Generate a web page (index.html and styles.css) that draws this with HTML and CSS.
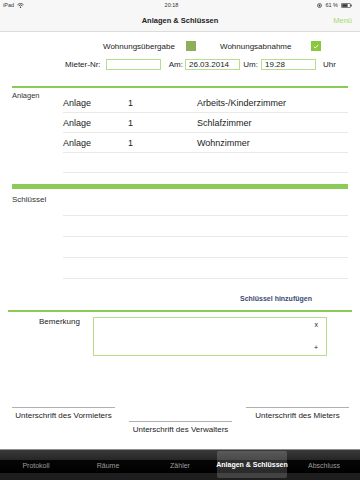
FILE: index.html
```html
<!DOCTYPE html>
<html lang="de">
<head>
    <meta charset="UTF-8">
    <meta name="viewport" content="width=device-width, initial-scale=1.0">
    <title>Anlagen &amp; Schlüssen</title>
    <link rel="stylesheet" href="styles.css">
</head>
<body>
    <div class="status">
        <span class="status-left">iPad
            <svg class="wifi" width="7" height="5" viewBox="0 0 7 5">
                <path d="M0.5 1.8 A4.2 4.2 0 0 1 6.5 1.8" fill="none" stroke="#333" stroke-width="0.8"/>
                <path d="M1.6 2.9 A2.6 2.6 0 0 1 5.4 2.9" fill="none" stroke="#333" stroke-width="0.8"/>
                <circle cx="3.5" cy="4.2" r="0.7" fill="#333"/>
            </svg>
        </span>
        <span class="status-time">20:18</span>
        <span class="status-right">
            <svg width="5" height="5" viewBox="0 0 5 5">
                <circle cx="2.5" cy="2.5" r="2" fill="none" stroke="#333" stroke-width="0.7"/>
                <circle cx="2.5" cy="2.5" r="0.9" fill="#333"/>
            </svg>
            61 %
            <svg width="11" height="5" viewBox="0 0 11 5">
                <rect x="0.4" y="0.4" width="9" height="4.2" rx="0.8" fill="none" stroke="#333" stroke-width="0.7"/>
                <rect x="1.2" y="1.2" width="5.4" height="2.6" fill="#333"/>
                <rect x="9.7" y="1.6" width="1" height="1.8" fill="#333"/>
            </svg>
        </span>
    </div>

    <div class="nav">
        <span></span>
        <span class="nav-title">Anlagen &amp; Schlüssen</span>
        <span class="nav-menu">Menü</span>
    </div>

    <div class="options">
        <span class="opt-label">Wohnungsübergabe</span>
        <span class="check"></span>
        <span class="opt-label opt-label-2">Wohnungsabnahme</span>
        <span class="check check-on">
            <svg width="6" height="5" viewBox="0 0 6 5">
                <path d="M0.8 2.6 L2.3 4 L5.2 0.9" fill="none" stroke="#fff" stroke-width="0.9"/>
            </svg>
        </span>
    </div>

    <div class="details">
        <span class="det-label">Mieter-Nr:</span>
        <span class="field"></span>
        <span class="det-label det-am">Am:</span>
        <span class="field">26.03.2014</span>
        <span class="det-label det-um">Um:</span>
        <span class="field">19.28</span>
        <span class="det-unit">Uhr</span>
    </div>

    <div class="rule"></div>

    <div class="group">
        <div class="group-label">Anlagen</div>
        <div class="rows">
            <div class="row"><span>Anlage</span><span>1</span><span>Arbeits-/Kinderzimmer</span></div>
            <div class="row"><span>Anlage</span><span>1</span><span>Schlafzimmer</span></div>
            <div class="row"><span>Anlage</span><span>1</span><span>Wohnzimmer</span></div>
            <div class="row"></div>
        </div>
    </div>

    <div class="rule rule-thick"></div>

    <div class="group group-keys">
        <div class="group-label">Schlüssel</div>
        <div class="rows">
            <div class="row"></div>
            <div class="row"></div>
            <div class="row"></div>
            <div class="row"></div>
        </div>
    </div>

    <div class="add-key">Schlüssel hinzufügen</div>

    <div class="rule rule-wide"></div>

    <div class="remark">
        <span class="remark-label">Bemerkung</span>
        <div class="remark-box">
            <span>x</span>
            <span>+</span>
        </div>
    </div>

    <div class="signatures">
        <div class="sign">Unterschrift des Vormieters</div>
        <div class="sign sign-mid">Unterschrift des Verwalters</div>
        <div class="sign">Unterschrift des Mieters</div>
    </div>

    <div class="tabbar">
        <div class="tab">Protokoll</div>
        <div class="tab">Räume</div>
        <div class="tab">Zähler</div>
        <div class="tab tab-active">Anlagen &amp; Schlüssen</div>
        <div class="tab">Abschluss</div>
    </div>
</body>
</html>
```

FILE: styles.css
```css
* {
    margin: 0;
    padding: 0;
    box-sizing: border-box;
}

body {
    font-family: 'Liberation Sans', Arial, sans-serif;
    color: #222;
    background: white;
    width: 360px;
    height: 480px;
    overflow: hidden;
    display: flex;
    flex-direction: column;
}

.status {
    height: 10px;
    background: #f7f7f7;
    display: grid;
    grid-template-columns: 1fr auto 1fr;
    align-items: center;
    padding: 0 8px 0 3px;
    font-size: 5.5px;
    color: #333;
}

.status-left {
    display: flex;
    align-items: center;
    gap: 3px;
}

.status-time {
    margin-right: 12px;
}

.status-right {
    justify-self: end;
    display: flex;
    align-items: center;
    gap: 3px;
}

.nav {
    height: 22px;
    background: #f7f7f7;
    border-bottom: 1px solid #dcdcdc;
    display: grid;
    grid-template-columns: 1fr auto 1fr;
    align-items: center;
}

.nav-title {
    font-weight: bold;
    font-size: 7.5px;
}

.nav-menu {
    justify-self: end;
    color: #a6d86d;
    font-size: 7.5px;
    padding-right: 8px;
}

.options {
    display: flex;
    align-items: center;
    height: 10px;
    margin-top: 9px;
    padding-left: 103px;
    font-size: 8px;
}

.opt-label {
    width: 83px;
}

.opt-label-2 {
    width: 91px;
    margin-left: 24px;
}

.check {
    width: 10px;
    height: 10px;
    background: #8fae5c;
}

.check-on {
    background: #8cc63f;
    display: flex;
    align-items: center;
    justify-content: center;
}

.details {
    display: flex;
    align-items: center;
    height: 11px;
    margin-top: 8px;
    padding-left: 65px;
    font-size: 8px;
}

.det-label {
    width: 41px;
}

.det-am {
    width: 24px;
    text-align: right;
    padding-right: 2px;
}

.det-um {
    width: 21px;
    text-align: right;
    padding-right: 3px;
}

.field {
    width: 55px;
    height: 11px;
    border: 1px solid #b7de8f;
    padding-left: 3px;
    line-height: 9px;
    font-size: 8px;
}

.det-unit {
    margin-left: 7px;
}

.rule {
    height: 2px;
    background: #8dcb58;
    margin: 16px 12px 0;
}

.rule-thick {
    height: 5px;
    margin-top: 11px;
}

.rule-wide {
    margin: 6px 8px 0;
}

.group {
    display: grid;
    grid-template-columns: 51px 1fr;
    margin: 0 12px;
}

.group-label {
    font-size: 7.5px;
    line-height: 10px;
    padding-top: 3px;
    color: #333;
}

.rows {
    padding-top: 5px;
}

.row {
    height: 20px;
    border-bottom: 1px solid #e9e9e9;
    display: grid;
    grid-template-columns: 65px 69px 1fr;
    align-items: center;
    font-size: 9px;
}

.group-keys .group-label {
    font-size: 8px;
    padding-top: 6px;
}

.group-keys .rows {
    padding-top: 6px;
}

.group-keys .row {
    height: 21px;
}

.add-key {
    margin-top: 15px;
    padding-left: 240px;
    font-size: 7px;
    line-height: 10px;
    font-weight: bold;
    color: #3b4a78;
}

.remark {
    display: flex;
    margin-top: 5px;
    padding-left: 39px;
}

.remark-label {
    width: 54px;
    font-size: 8px;
    line-height: 10px;
}

.remark-box {
    width: 234px;
    height: 39px;
    border: 1px solid #b7de8f;
    display: flex;
    flex-direction: column;
    justify-content: space-between;
    align-items: flex-end;
    padding: 2px 8px 2px 0;
    font-size: 7px;
    line-height: 10px;
}

.signatures {
    display: grid;
    grid-template-columns: 103px 103px 103px;
    column-gap: 14px;
    align-items: start;
    margin-top: 51px;
    padding-left: 12px;
}

.sign {
    border-top: 1px solid #b0b0b0;
    text-align: center;
    font-size: 8px;
    line-height: 10px;
    padding-top: 3px;
    white-space: nowrap;
}

.sign-mid {
    margin-top: 14px;
}

.tabbar {
    margin-top: auto;
    height: 31px;
    border-top: 1px solid #8e8e8e;
    background: linear-gradient(to bottom, #3a3a3a 0, #262626 10px, #050505 10px, #000 23px, #1e1e1e 23px, #1e1e1e 100%);
    display: grid;
    grid-template-columns: repeat(5, 72px);
}

.tab {
    display: flex;
    align-items: center;
    justify-content: center;
    font-size: 7px;
    color: #9b9b9b;
    white-space: nowrap;
}

.tab-active {
    margin: 1px 1px 2px;
    border-radius: 2px;
    background: rgba(255,255,255,0.17);
    color: white;
    font-weight: bold;
}
```
